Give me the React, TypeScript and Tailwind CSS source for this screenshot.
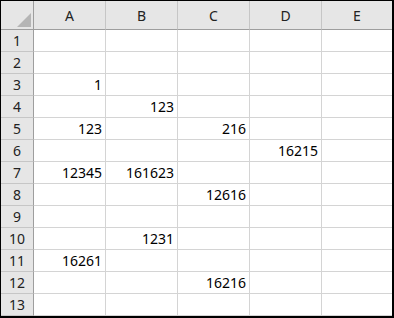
const COLUMNS = ['A', 'B', 'C', 'D', 'E'];
const ROW_COUNT = 13;

// row number -> column letter -> value
const DATA: Record<number, Record<string, string>> = {
  3: { A: '1' },
  4: { B: '123' },
  5: { A: '123', C: '216' },
  6: { D: '16215' },
  7: { A: '12345', B: '161623' },
  8: { C: '12616' },
  10: { B: '1231' },
  11: { A: '16261' },
  12: { C: '16216' },
};

export default function App() {
  const rows = Array.from({ length: ROW_COUNT }, (_, i) => i + 1);

  return (
    <div className="w-[394px] h-[318px] bg-white border-t border-l border-r-2 border-b-2 border-black overflow-hidden font-['Noto_Sans',sans-serif] text-[14px] leading-[19px]">
      <div className="grid grid-cols-[33px_repeat(4,72px)_1fr] grid-rows-[29px_repeat(13,22px)]">
        {/* Corner */}
        <div className="relative bg-[#e6e6e6] border-r border-b border-[#9e9e9e]">
          <svg className="absolute left-[16px] top-[12px]" width="14" height="14" viewBox="0 0 14 14">
            <polygon points="14,0 14,14 0,14" fill="#b5b5b5" />
          </svg>
        </div>

        {/* Column headers */}
        {COLUMNS.map((col, i) => (
          <div
            key={col}
            className={`flex items-center justify-center bg-[#e6e6e6] border-b border-[#9e9e9e] text-[#222] ${
              i < COLUMNS.length - 1 ? 'border-r border-r-[#c6c6c6]' : ''
            }`}
          >
            {col}
          </div>
        ))}

        {rows.map((r) => (
          <div key={r} className="contents">
            <div className="flex items-center justify-center bg-[#e6e6e6] border-r border-r-[#9e9e9e] border-b border-b-[#c6c6c6] text-[#222]">
              {r}
            </div>
            {COLUMNS.map((col, i) => (
              <div
                key={col}
                className={`flex items-center justify-end pr-[3px] border-b border-[#d4d4d4] text-black ${
                  i < COLUMNS.length - 1 ? 'border-r' : ''
                }`}
              >
                {DATA[r]?.[col] ?? ''}
              </div>
            ))}
          </div>
        ))}
      </div>
    </div>
  );
}
